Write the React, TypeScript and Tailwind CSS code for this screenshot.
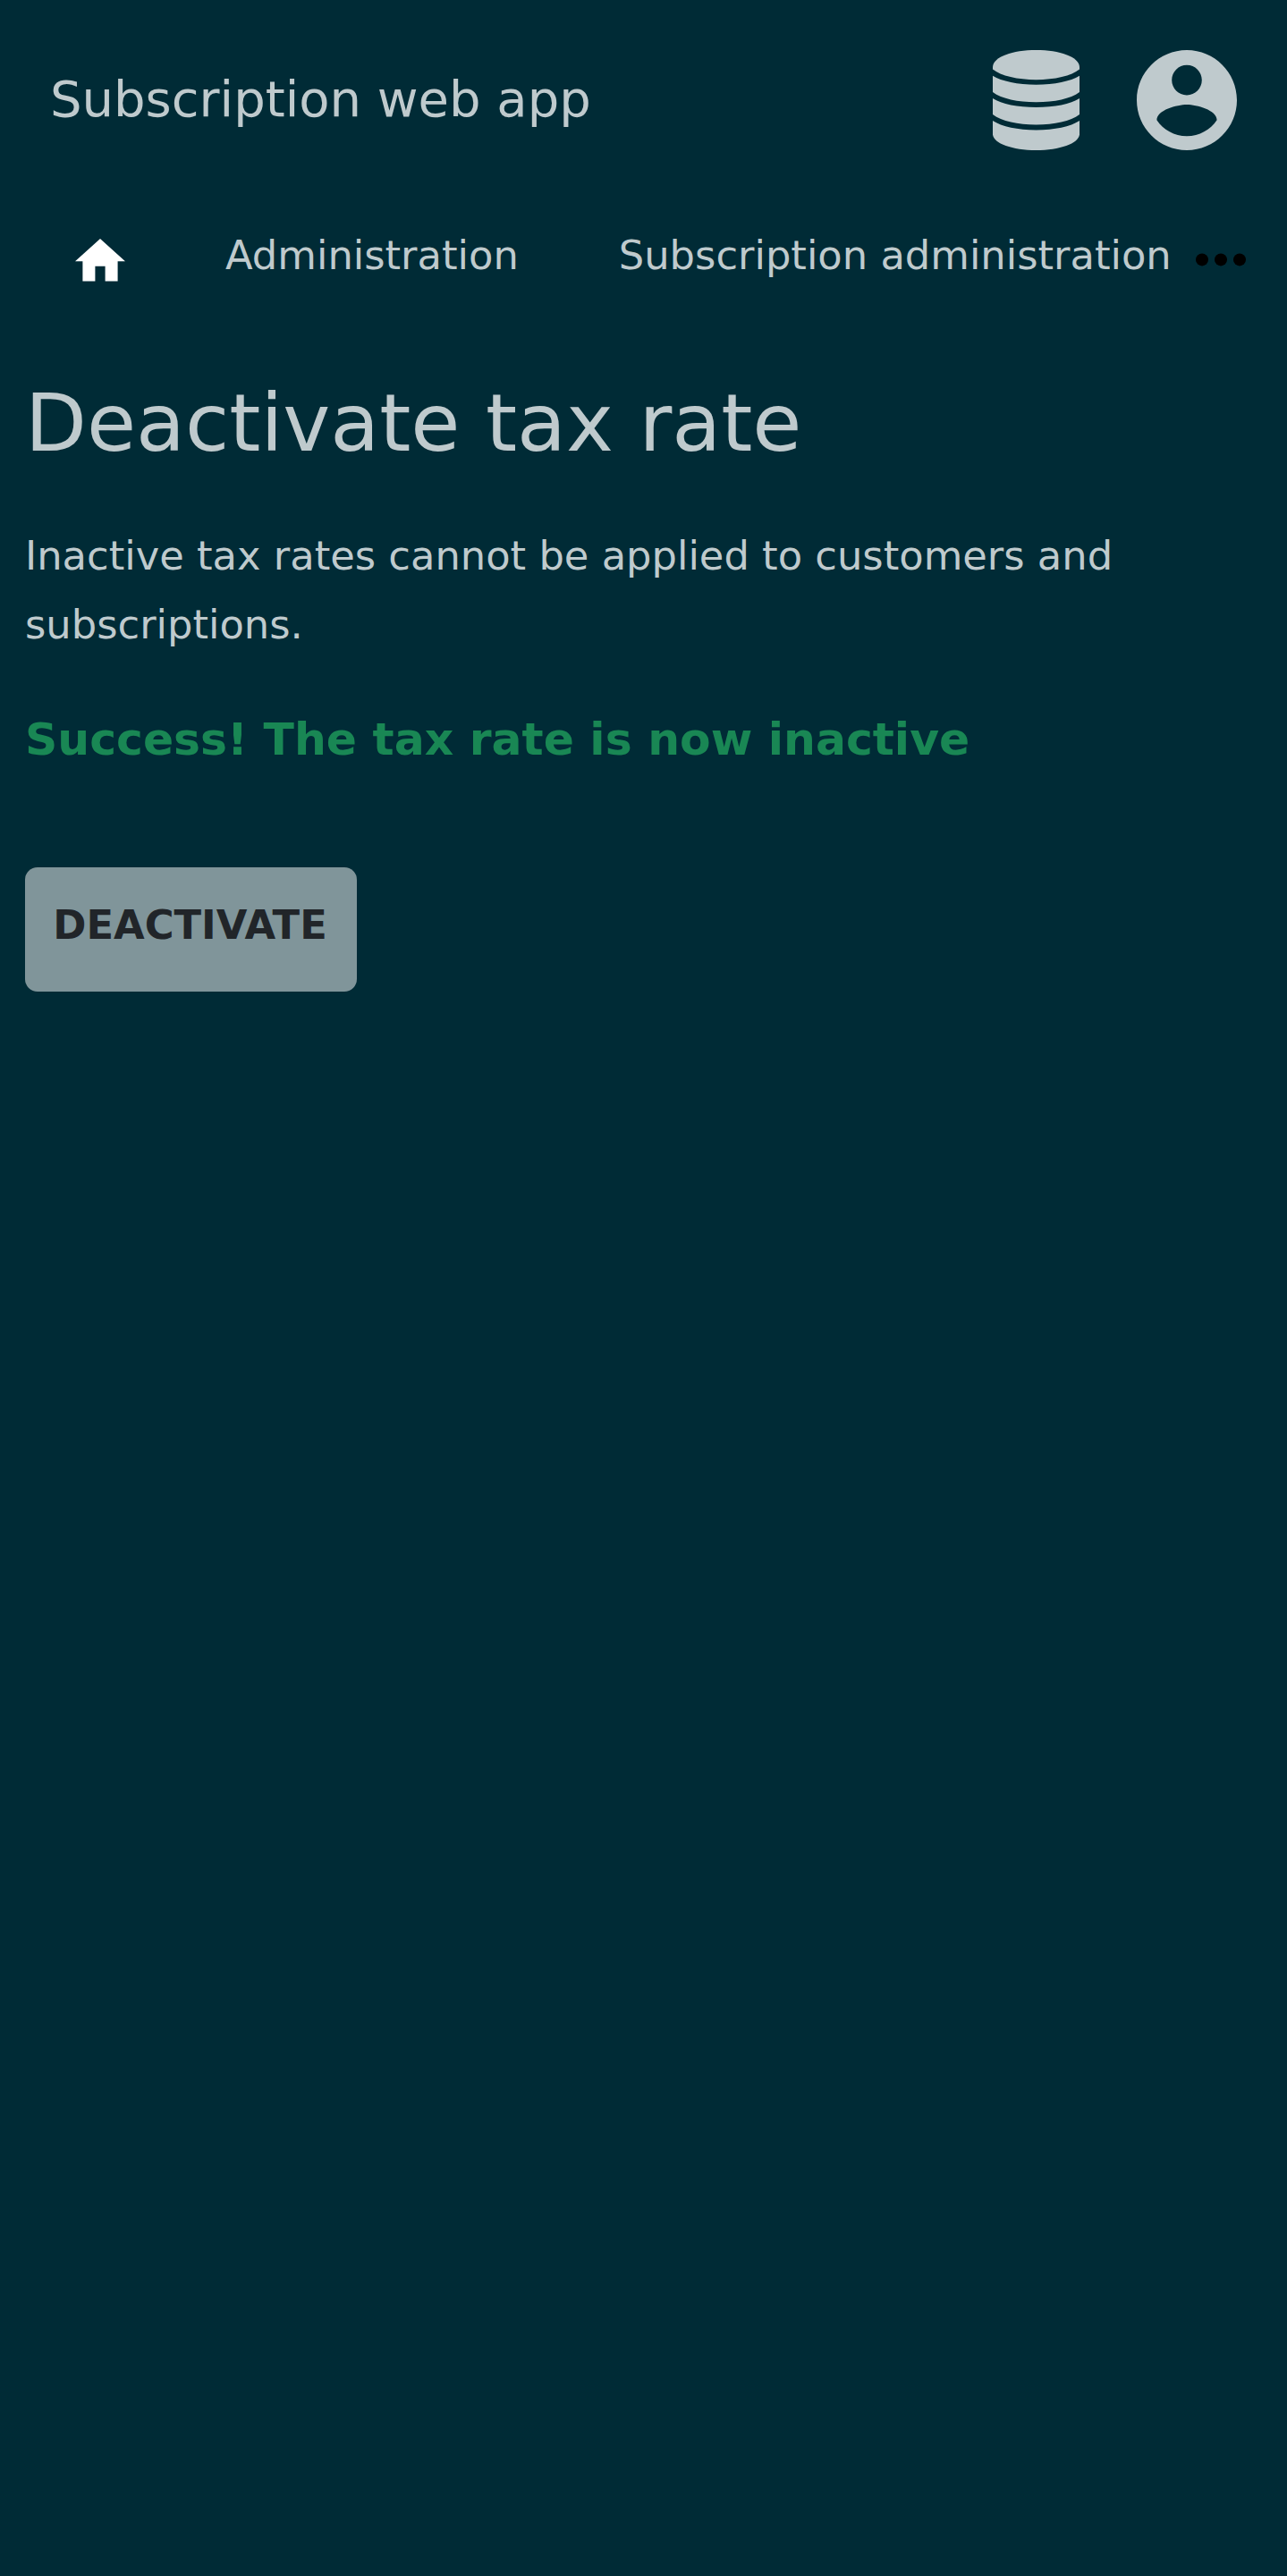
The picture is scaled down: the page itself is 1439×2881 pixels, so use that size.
function DatabaseIcon() {
  return (
    <svg className="h-[112px] w-[97px]" viewBox="0 0 97 112" fill="currentColor" aria-label="Database">
      <path d="M0 18.5C1 7.5 22 0 48.5 0S96 7.5 97 18.5V21.6C88 29 69 33.2 48.5 33.2S9 29 0 21.6Z" />
      <path d="M0 28.8C10 35 28 38.7 48.5 38.7S87 35 97 28.8V47C87 54.5 69 58.2 48.5 58.2S10 54.5 0 47Z" />
      <path d="M0 54C10 60.5 28 64 48.5 64S87 60.5 97 54V72C87 79.5 69 83.4 48.5 83.4S10 79.5 0 72Z" />
      <path d="M0 79C10 85.7 28 89.4 48.5 89.4S87 85.7 97 79V94.5C96 104.5 75 112 48.5 112S1 104.5 0 94.5Z" />
    </svg>
  );
}

function AccountIcon() {
  return (
    <svg className="h-[112px] w-[112px]" viewBox="2 2 20 20" fill="currentColor" aria-label="Account">
      <path d="M12 2C6.48 2 2 6.48 2 12s4.48 10 10 10 10-4.48 10-10S17.52 2 12 2zm0 3c1.66 0 3 1.34 3 3s-1.34 3-3 3-3-1.34-3-3 1.34-3 3-3zm0 14.2c-2.5 0-4.71-1.28-6-3.22.03-1.99 4-3.08 6-3.08 1.99 0 5.97 1.09 6 3.08-1.29 1.94-3.5 3.22-6 3.22z" />
    </svg>
  );
}

function HomeIcon() {
  return (
    <svg className="mt-5 h-[47.6px] w-14 text-white" viewBox="2 3 20 17" fill="currentColor" aria-label="Home">
      <path d="M10 20v-6h4v6h5v-8h3L12 3 2 12h3v8z" />
    </svg>
  );
}

function MoreIcon() {
  return (
    <svg className="mt-9 ml-auto h-[15px] w-14 text-black" viewBox="0 0 56 15" fill="currentColor" aria-label="More">
      <circle cx="7" cy="7.4" r="7" />
      <circle cx="28" cy="7.4" r="7" />
      <circle cx="49" cy="7.4" r="7" />
    </svg>
  );
}

export default function App() {
  return (
    <div className="min-h-[2881px] w-full bg-[#002b36] font-['DejaVu_Sans',sans-serif] text-[44.8px] leading-[77px] text-[#bfcacd]">
      <header className="flex h-[247px] items-start px-14 pt-[55px]">
        <span className="text-[56px] leading-[111px] whitespace-nowrap">Subscription web app</span>
        <div className="mt-px ml-auto flex gap-16">
          <DatabaseIcon />
          <AccountIcon />
        </div>
      </header>
      <nav className="flex h-[174px] items-start pr-[46px] pl-[84px] whitespace-nowrap">
        <HomeIcon />
        <a className="ml-28">Administration</a>
        <a className="ml-28">Subscription administration</a>
        <MoreIcon />
      </nav>
      <main className="flex flex-col items-start px-7">
        <h1 className="text-[89.6px] leading-[104px]">Deactivate tax rate</h1>
        <p className="mt-[58px]">Inactive tax rates cannot be applied to customers and subscriptions.</p>
        <p className="mt-[60px] text-[50.4px] leading-[59px] font-bold text-[#198754]">
          Success! The tax rate is now inactive
        </p>
        <button className="mt-[114px] h-[139px] w-[371px] rounded-[14px] bg-[#80959a] pt-[26px] pr-[2px] pb-9 font-bold text-[#212529]">
          DEACTIVATE
        </button>
      </main>
    </div>
  );
}
